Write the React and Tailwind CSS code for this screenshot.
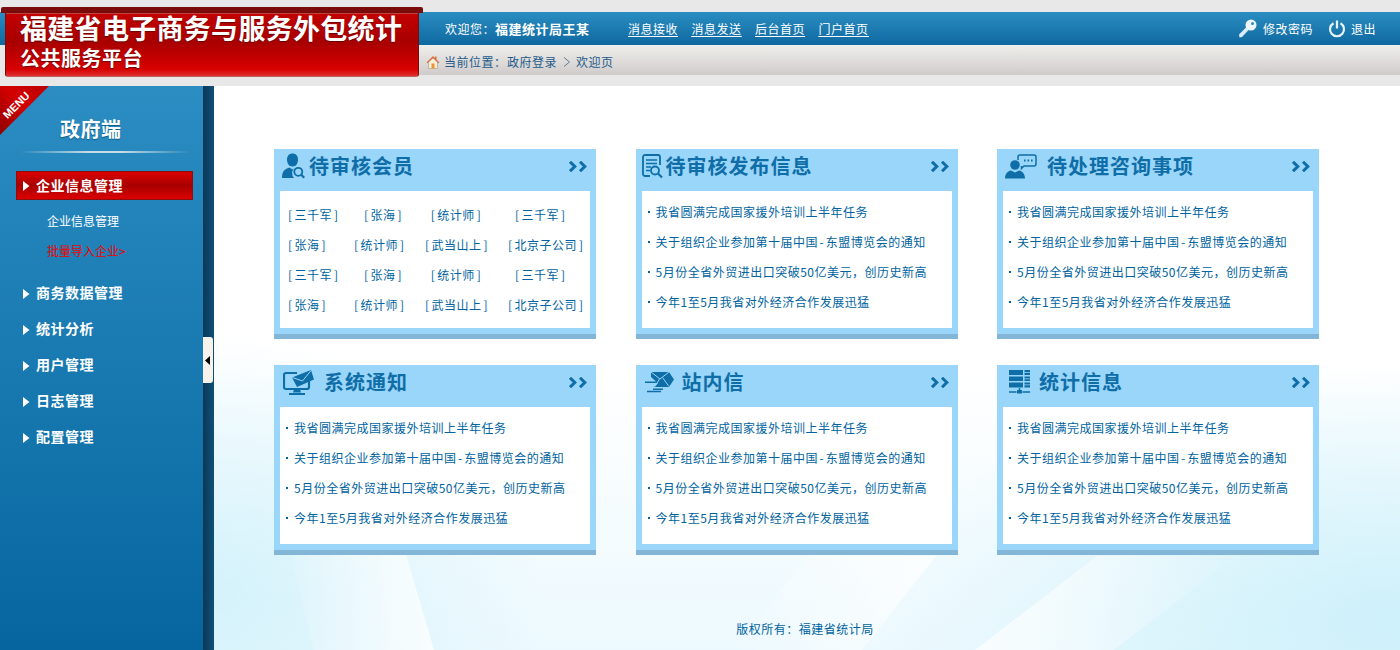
import React from "react";

const FONT = "font-['Noto_Sans_CJK_SC','Liberation_Sans',sans-serif]";

const Dash = () => <span className="px-[1.5px]">-</span>;

const NEWS = [
  { k: "a", n: "我省圆满完成国家援外培训上半年任务" },
  {
    k: "b",
    n: (
      <>
        关于组织企业参加第十届中国
        <Dash />
        东盟博览会的通知
      </>
    ),
  },
  { k: "c", n: "5月份全省外贸进出口突破50亿美元，创历史新高" },
  { k: "d", n: "今年1至5月我省对外经济合作发展迅猛" },
];

const C = "#0f6ea8";

function UserSearchIcon() {
  return (
    <svg width="23" height="26" viewBox="0 0 23 26" className="shrink-0">
      <path d="M5 6.500C5 2.500 7.500 0.500 10.500 0.500S16 2.500 16 6.500c0 3.500-1.500 7-5.500 7S5 10 5 6.500z" fill={C} />
      <path d="M0 25c0-6 2-9 7.500-10.500l3 2 1.500-1a7 7 0 0 0 0 9.500z" fill={C} />
      <circle cx="16.300" cy="18.800" r="4" fill="none" stroke={C} strokeWidth="1.800" />
      <path d="M19.200 21.700l3 3" stroke={C} strokeWidth="2.200" />
    </svg>
  );
}

function DocSearchIcon() {
  return (
    <svg width="21" height="25" viewBox="0 0 21 25" className="shrink-0">
      <path d="M8 22H3a2 2 0 0 1-2-2V3a2 2 0 0 1 2-2h13a2 2 0 0 1 2 2v8" fill="none" stroke={C} strokeWidth="1.800" />
      <path d="M4 6h11M4 9.500h11M4 13h5M4 16.500h4" stroke={C} strokeWidth="1.500" />
      <circle cx="13" cy="16.500" r="4" fill="none" stroke={C} strokeWidth="1.800" />
      <path d="M16 19.500l4 4" stroke={C} strokeWidth="2.200" />
    </svg>
  );
}

function ChatUserIcon() {
  return (
    <svg width="32" height="25" viewBox="0 0 32 25" className="shrink-0">
      <circle cx="10" cy="11" r="4.800" fill={C} />
      <path d="M0 24.500c0-5 3-7.500 6-8l4 2 4-2c3 .5 6 3 6 8z" fill={C} />
      <path d="M13 6V3a2 2 0 0 1 2-2h14a2 2 0 0 1 2 2v7a2 2 0 0 1-2 2H19l-2.500 2.500V12" fill="none" stroke={C} strokeWidth="1.500" />
      <path d="M19 6.500h1.600M22.500 6.500h1.600M26 6.500h1.600" stroke={C} strokeWidth="1.800" />
    </svg>
  );
}

function MonitorMailIcon() {
  return (
    <svg width="32" height="26" viewBox="0 0 32 26" className="shrink-0">
      <path d="M14 4H3a2 2 0 0 0-2 2v12a2 2 0 0 0 2 2h21a2 2 0 0 0 2-2v-6" fill="none" stroke={C} strokeWidth="2.200" />
      <path d="M11 20.500h6l1 3h-8z" fill={C} />
      <path d="M6 25h16" stroke={C} strokeWidth="2" />
      <path d="M9 8.500L28 1l3 9.500L14 18z" fill={C} />
      <path d="M9.500 8.500l10 3.500 8.500-10.500" fill="none" stroke="#9ad6f9" strokeWidth="1" />
    </svg>
  );
}

function FastMailIcon() {
  return (
    <svg width="30" height="22" viewBox="0 0 30 22" className="shrink-0">
      <path d="M7 1H25L30 8.500 25 16H10L14 12H1V10.500H12L7 6z" fill={C} />
      <path d="M7 1L16 8 25 1M11 15.500L15.500 8M25 15.500L18.500 6.500" fill="none" stroke="#9ad6f9" strokeWidth="1" />
      <path d="M9 18.200h10M3 20.500h14" stroke={C} strokeWidth="1.500" />
    </svg>
  );
}

function ServerIcon() {
  return (
    <svg width="21" height="24" viewBox="0 0 21 24" className="shrink-0">
      <path d="M0 0h14v5H0zM15.500 0H21v2.200h-5.500zM15.500 3H21v2h-5.500zM0 6.500h14V11H0zM15.500 6.500H21v2h-5.500zM15.500 9.300H21V11h-5.500zM0 12.500h14v5H0zM15.500 12.500H21v2h-5.500zM15.500 15.300H21v2.200h-5.500z" fill={C} />
      <path d="M10.500 18v3M0 22h7.500M13.500 22H21" stroke={C} strokeWidth="1.500" />
      <rect x="8" y="20" width="5" height="3.500" fill={C} />
    </svg>
  );
}

function Chevrons() {
  return (
    <svg width="18" height="11" viewBox="0 0 18 11" className="shrink-0">
      <path d="M1 0.800L5.800 5.500 1 10.200" fill="none" stroke={C} strokeWidth="3" />
      <path d="M11 0.800L15.800 5.500 11 10.200" fill="none" stroke={C} strokeWidth="3" />
    </svg>
  );
}

function Card({ icon, title, iconClass, children }) {
  return (
    <div className="h-[190px] bg-[#9ad6f9] border-b-[5px] border-[#82b5d6] flex flex-col">
      <div className="h-[42px] pb-[8px] flex items-center shrink-0">
        <div className={iconClass}>{icon}</div>
        <h2 className="text-[20px] leading-[28px] font-bold tracking-[1px] text-[#0f6ea8]">{title}</h2>
        <div className="ml-auto mr-[9px] flex">
          <Chevrons />
        </div>
      </div>
      <div className="mx-[6px] h-[137px] bg-white">{children}</div>
    </div>
  );
}

function NewsList() {
  return (
    <ul className="pt-[6px]">
      {NEWS.map(({ k, n }) => (
        <li key={k} className="h-[30px] flex items-center pl-[6px] text-[12px] tracking-[0.5px] text-[#00639f]">
          <span className="w-[2px] h-[2px] bg-[#00639f] mr-[6px] shrink-0" />
          <span className="whitespace-nowrap">{n}</span>
        </li>
      ))}
    </ul>
  );
}

function Tag({ t }) {
  return (
    <a className="whitespace-nowrap">
      <span className="inline-block w-[6.5px] text-left">[</span>
      {t}
      <span className="inline-block w-[6.5px] text-right">]</span>
    </a>
  );
}

function Members() {
  const rowA = ["三千军", "张海", "统计师", "三千军"];
  const rowB = ["张海", "统计师", "武当山上", "北京子公司"];
  const rows = [rowA, rowB, rowA, rowB];
  return (
    <div className="pt-[9px] pl-[8px] text-[12px] tracking-[0.5px] text-[#00639f]">
      {rows.map((r, i) => (
        <div key={i} className="h-[30px] grid grid-cols-[66px_71px_83px_74px] items-center">
          <div className="text-left">
            <Tag t={r[0]} />
          </div>
          <div className="text-right pr-[23px]">
            <Tag t={r[1]} />
          </div>
          <div className="text-center pr-[21px]">
            <Tag t={r[2]} />
          </div>
          <div className={i % 2 === 0 ? "text-left pl-[7px]" : "text-left"}>
            <Tag t={r[3]} />
          </div>
        </div>
      ))}
    </div>
  );
}

function NavArrow() {
  return (
    <svg width="7" height="10" viewBox="0 0 7 10" className="shrink-0">
      <path d="M0 0l6.500 5L0 10z" fill="#fff" />
    </svg>
  );
}

function Sidebar() {
  const items = ["商务数据管理", "统计分析", "用户管理", "日志管理", "配置管理"];
  return (
    <aside className="relative w-[214px] shrink-0 flex text-white">
      <div className="relative w-[203px] bg-[linear-gradient(180deg,#2b8dc2,#06659f)]">
        <div className="absolute left-0 top-0 w-[50px] h-[50px]">
          <svg width="50" height="50" viewBox="0 0 50 50">
            <defs>
              <linearGradient id="rb" x1="0" y1="1" x2="1" y2="0">
                <stop offset="0" stopColor="#8f0000" />
                <stop offset="0.550" stopColor="#d40000" />
                <stop offset="1" stopColor="#b80000" />
              </linearGradient>
            </defs>
            <path d="M0 0H49L0 49z" fill="url(#rb)" />
          </svg>
          <span className="absolute left-0 top-[13px] -rotate-45 text-[11px] leading-[12px] font-bold font-['Liberation_Sans',sans-serif] text-white">MENU</span>
        </div>
        <h1 className="pt-[29px] pl-[60px] text-[20px] leading-[28px] font-bold tracking-[0.5px] [text-shadow:0_1px_1px_#0a5a8a]">政府端</h1>
        <div className="mt-[8px] ml-[20px] w-[170px] h-[2px] bg-[linear-gradient(90deg,transparent,#c5dce8_40%,#c5dce8_60%,transparent)]" />
        <div className="mt-[18px] ml-[16px] w-[177px] h-[29px] border border-[#8a1010] bg-[linear-gradient(180deg,#dc0000,#a80000_50%,#dc0000)] flex items-center pl-[6px] gap-[6px]">
          <NavArrow />
          <span className="text-[14px] leading-[20px] pb-[2px] font-bold tracking-[0.5px]">企业信息管理</span>
        </div>
        <ul className="mt-[6px] pl-[47px] text-[12px]">
          <li className="h-[30px] leading-[30px]">企业信息管理</li>
          <li className="h-[30px] leading-[30px] text-[#ee0000]">批量导入企业&gt;</li>
        </ul>
        <ul className="mt-[10px]">
          {items.map((t) => (
            <li key={t} className="h-[36px] flex items-center pl-[23px] gap-[6px]">
              <NavArrow />
              <span className="text-[14px] leading-[20px] pb-[4px] font-bold tracking-[0.5px]">{t}</span>
            </li>
          ))}
        </ul>
      </div>
      <div className="w-[11px] bg-[linear-gradient(90deg,#0b3857,#0f5078)]" />
      <div className="absolute left-[203px] top-[251px] w-[10px] h-[46px] rounded-r-[3px] bg-[#f7f3ec] flex items-center">
        <svg width="5" height="9" viewBox="0 0 5 9" className="ml-[2px]">
          <path d="M5 0v9L0 4.500z" fill="#000" />
        </svg>
      </div>
    </aside>
  );
}

function Header() {
  return (
    <header className="relative h-[86px] bg-[#e8e8e8] pt-[12px] text-[12px] tracking-[0.5px]">
      <div className="h-[33px] bg-[linear-gradient(180deg,#2a8dc1,#0f69a0)] flex items-center pl-[445px] pr-[24px] text-white">
        <span className="w-[50px]">欢迎您：</span>
        <b className="text-[13px] w-[133px] font-bold">福建统计局王某</b>
        <nav className="flex gap-[13.5px] underline underline-offset-2">
          <a>消息接收</a>
          <a>消息发送</a>
          <a>后台首页</a>
          <a>门户首页</a>
        </nav>
        <div className="ml-auto flex items-center">
          <svg width="19" height="19" viewBox="0 0 19 19" className="mr-[6px]">
            <path d="M9 7.500L1 15.500l.5 3 2.500-.5 7.500-8z" fill="#dcecf5" />
            <circle cx="13" cy="6" r="5.500" fill="#eef6fb" />
            <circle cx="14.500" cy="4.500" r="1.500" fill="#2a8dc1" />
          </svg>
          <span>修改密码</span>
          <svg width="18" height="18" viewBox="0 0 18 18" className="ml-[15px] mr-[5px]">
            <path d="M5.500 3.200a7 7 0 1 0 7 0" fill="none" stroke="#e6f2f8" strokeWidth="2.200" />
            <path d="M9 0.500v8" stroke="#e6f2f8" strokeWidth="2.200" />
          </svg>
          <span>退出</span>
        </div>
      </div>
      <div className="ml-[419px] h-[30px] pt-[3px] bg-[linear-gradient(180deg,#efefeb,#d0cbcb)] flex items-center pl-[7px] text-[#1f5c8c]">
        <svg width="14" height="14" viewBox="0 0 14 14" className="mr-[4px]">
          <path d="M2.500 7v6.500h9V7L7 3z" fill="#f7efdc" stroke="#a8987c" strokeWidth="0.600" />
          <path d="M5.500 8.500h3v5h-3z" fill="#f0922e" />
          <path d="M7 1L0.500 7.500l1 .8L7 3l5.500 5.300 1-.8L10.500 4.500V1.500H9v1.500z" fill="#d9703a" />
        </svg>
        <span className="w-[63px]">当前位置：</span>
        <span>政府登录</span>
        <svg width="8" height="10" viewBox="0 0 8 10" className="mx-[5.5px]">
          <path d="M1 0.500L6.500 5 1 9.500" fill="none" stroke="#5b7f9c" strokeWidth="1" />
        </svg>
        <span>欢迎页</span>
      </div>
      <div className="absolute left-[5px] top-[7px] w-[414px] h-[70px] rounded-b-[3px] border border-[#7a0c0c] border-b-[#c06060] bg-[linear-gradient(180deg,#c80000,#a80000_50%,#d80000_90%,#e03030)] text-white tracking-normal">
        <div className="absolute -left-[5px] -right-[5px] -top-px h-[6px] rounded-t-[2px] bg-[#7a0c0c]" />
        <div className="absolute left-0 right-0 top-[5px] h-px bg-[#c04040]" />
        <div className="pl-[14px] pt-[4px] text-[27px] leading-[32px] font-bold tracking-[0.3px] whitespace-nowrap [text-shadow:0_1px_1px_#600]">福建省电子商务与服务外包统计</div>
        <div className="pl-[14px] text-[20px] leading-[24px] mt-[2px] font-bold tracking-[0.5px] [text-shadow:0_1px_1px_#600]">公共服务平台</div>
      </div>
    </header>
  );
}

function Backdrop() {
  return (
    <svg className="absolute inset-0 w-full h-full" viewBox="0 0 1186 564" preserveAspectRatio="none">
      <defs>
        <linearGradient id="b1" x1="0" y1="0" x2="1" y2="0">
          <stop offset="0" stopColor="#fff" stopOpacity="0" />
          <stop offset="1" stopColor="#fff" stopOpacity="0.75" />
        </linearGradient>
        <linearGradient id="b2" x1="0" y1="0" x2="1" y2="0">
          <stop offset="0" stopColor="#fff" stopOpacity="0.75" />
          <stop offset="1" stopColor="#fff" stopOpacity="0" />
        </linearGradient>
      </defs>
      <path d="M60 400H172L220 564H100z" fill="url(#b1)" />
      <path d="M594 470H722L648 564H520z" fill="url(#b1)" />
      <path d="M883 470H1022L900 564H761z" fill="url(#b2)" />
    </svg>
  );
}

export default function App() {
  return (
    <div className={`w-[1400px] h-[650px] overflow-hidden flex flex-col ${FONT}`}>
      <Header />
      <div className="flex flex-1 min-h-0">
        <Sidebar />
        <main className="relative flex-1 flex flex-col bg-[radial-gradient(ellipse_330px_260px_at_0%_90%,#d4f2fb,transparent),radial-gradient(ellipse_520px_260px_at_100%_95%,#cdf0fa,transparent),linear-gradient(180deg,#fff_50%,#ecf9fe_100%)]">
          <Backdrop />
          <div className="relative pt-[63px] pl-[60px] grid grid-cols-[322px_322px_322px] gap-x-[39.5px] gap-y-[26px] w-fit">
            <Card icon={<UserSearchIcon />} title="待审核会员" iconClass="ml-[8px] mr-[4px]">
              <Members />
            </Card>
            <Card icon={<DocSearchIcon />} title="待审核发布信息" iconClass="ml-[6px] mr-[3px]">
              <NewsList />
            </Card>
            <Card icon={<ChatUserIcon />} title="待处理咨询事项" iconClass="ml-[8px] mr-[10px]">
              <NewsList />
            </Card>
            <Card icon={<MonitorMailIcon />} title="系统通知" iconClass="ml-[9px] mr-[9px]">
              <NewsList />
            </Card>
            <Card icon={<FastMailIcon />} title="站内信" iconClass="ml-[8px] mr-[8px]">
              <NewsList />
            </Card>
            <Card icon={<ServerIcon />} title="统计信息" iconClass="ml-[12px] mr-[9px]">
              <NewsList />
            </Card>
          </div>
          <footer className="relative mt-auto mb-[12px] text-center pr-[4px] text-[12px] leading-[18px] tracking-[0.5px] text-[#00639f]">版权所有：福建省统计局</footer>
        </main>
      </div>
    </div>
  );
}
